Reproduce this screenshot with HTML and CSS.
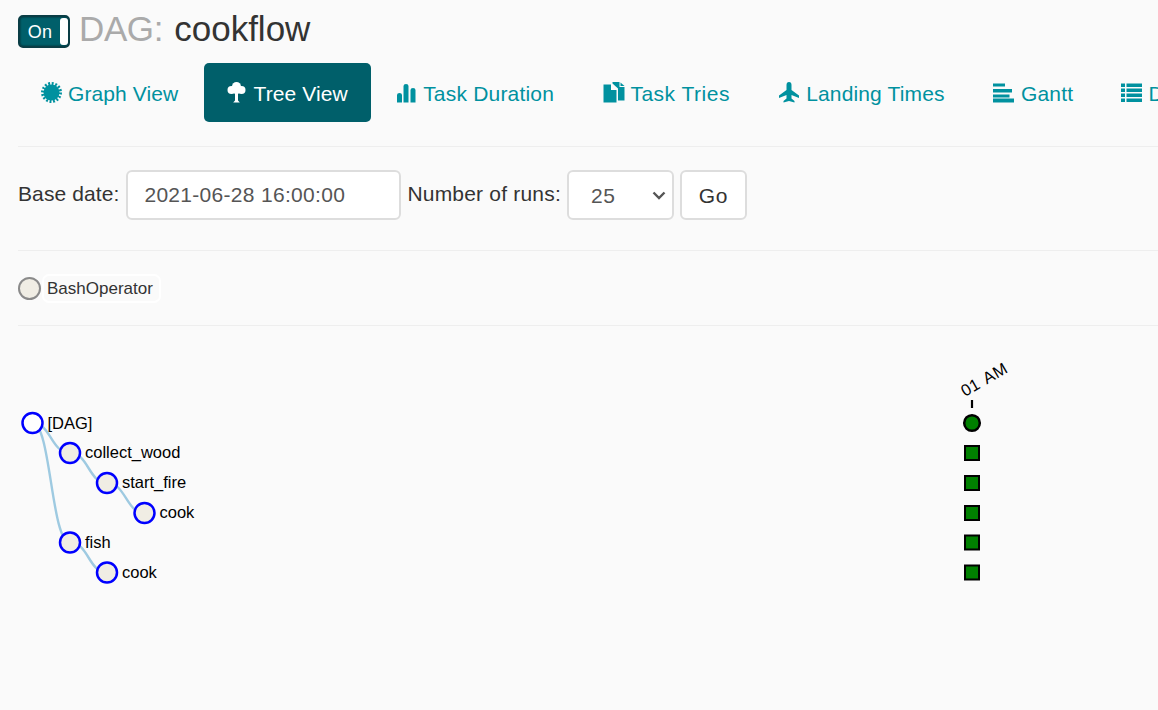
FILE: index.html
```html
<!DOCTYPE html>
<html lang="en">
<head>
<meta charset="utf-8">
<title>DAG: cookflow</title>
<link rel="stylesheet" href="styles.css">
</head>
<body>
<div class="page">
  <header class="title-row">
    <div class="toggle"><span class="toggle-on">On</span><span class="toggle-handle"></span></div>
    <h1 class="title"><span class="title-muted">DAG:</span> cookflow</h1>
  </header>

  <nav class="tabs">
    <a class="tab tab-graph">
      <svg class="icon" viewBox="0 0 22 22"><circle class="fill" cx="10.500" cy="10.500" r="8"/><circle class="spikes" cx="10.500" cy="10.500" r="9"/></svg>
      Graph View</a>
    <a class="tab tab-tree active">
      <svg class="icon" viewBox="0 0 22 22"><g class="fill"><circle cx="10.500" cy="4.500" r="4.500"/><circle cx="5.500" cy="8" r="4"/><circle cx="15.500" cy="8" r="4"/><circle cx="10.500" cy="8" r="4"/><path d="M9 10h3v8.500l1.800 2h-6.600l1.800-2z"/></g></svg>
      Tree View</a>
    <a class="tab">
      <svg class="icon" viewBox="0 0 22 22"><g class="fill"><path d="M1 20.500V13q0-2 2.500-2T6 13v7.500z"/><path d="M7.500 20.500V4q0-2 2.500-2t2.500 2v16.500z"/><path d="M14.500 20.500V8q0-2 2.500-2t2.500 2v12.500z"/></g></svg>
      Task Duration</a>
    <a class="tab tab-tries">
      <svg class="icon" viewBox="0 0 22 22"><g class="fill"><path d="M.5 2.500H8v5.500h5.500v12.500H.5z"/><path d="M9.500 0H16.500v5h5v13.500h-6.500V6.500L9.500 1.500z"/><path d="M17.500 .5l4 3.500h-4z"/></g></svg>
      Task Tries</a>
    <a class="tab tab-landing">
      <svg class="icon" viewBox="0 0 22 22"><path class="fill" d="M7.500 3q0-3 2.500-3t2.500 3v5l7.500 5.500v2.500l-7.500-3v3.500l3 2.500v1.500l-5.500-1.500-5.500 1.500v-1.500l3-2.500v-3.500l-7.500 3v-2.500l7.500-5.500z"/></svg>
      Landing Times</a>
    <a class="tab tab-gantt">
      <svg class="icon" viewBox="0 0 22 22"><g class="fill"><rect x="0" y="1.500" width="12" height="3"/><rect x="0" y="7" width="19" height="3.500"/><rect x="0" y="12.500" width="16.500" height="3"/><rect x="0" y="16.500" width="21" height="4"/></g></svg>
      Gantt</a>
    <a class="tab">
      <svg class="icon" viewBox="0 0 22 22"><g class="fill"><rect x="0" y="1.500" width="4" height="3.500"/><rect x="5.500" y="1.500" width="15.500" height="3.500"/><rect x="0" y="6.500" width="4" height="3.500"/><rect x="5.500" y="6.500" width="15.500" height="3.500"/><rect x="0" y="11.500" width="4" height="3.500"/><rect x="5.500" y="11.500" width="15.500" height="3.500"/><rect x="0" y="16.500" width="4" height="3.500"/><rect x="5.500" y="16.500" width="15.500" height="3.500"/></g></svg>
      Details</a>
  </nav>

  <hr class="rule rule-nav">

  <form class="controls">
    <label class="label label-date" for="base-date">Base date:</label>
    <input class="field date-field" id="base-date" type="text" value="2021-06-28 16:00:00">
    <label class="label label-runs" for="runs">Number of runs:</label>
    <div class="field select-field" id="runs"><span>25</span>
      <svg class="chevron" viewBox="0 0 14 9"><path d="M1.500 1.500L7 7l5.500-5.500"/></svg>
    </div>
    <button class="go" type="button">Go</button>
  </form>

  <hr class="rule rule-form">

  <div class="legend">
    <span class="legend-dot"></span>
    <span class="legend-label">BashOperator</span>
  </div>

  <hr class="rule rule-legend">

  <svg class="tree" viewBox="18 326 1140 384">
    <g class="links">
      <path d="M32.500 423C51 423 51 453 70 453"/>
      <path d="M32.500 423C51 423 51 542.500 70 542.500"/>
      <path d="M70 453C88.500 453 88.500 483 107 483"/>
      <path d="M107 483C126 483 126 513 144.500 513"/>
      <path d="M70 542.500C88.500 542.500 88.500 572.500 107 572.500"/>
    </g>
    <g class="nodes">
      <circle class="node-root" cx="32.500" cy="423" r="10"/>
      <circle cx="70" cy="453" r="10"/>
      <circle cx="107" cy="483" r="10"/>
      <circle cx="144.500" cy="513" r="10"/>
      <circle cx="70" cy="542.500" r="10"/>
      <circle cx="107" cy="572.500" r="10"/>
    </g>
    <g class="labels">
      <text x="47.500" y="429">[DAG]</text>
      <text x="85" y="458">collect_wood</text>
      <text x="122" y="488">start_fire</text>
      <text x="159.500" y="518">cook</text>
      <text x="85" y="548">fish</text>
      <text x="122" y="578">cook</text>
    </g>
    <text class="run-label" transform="translate(965 397) rotate(-30)">01 AM</text>
    <line class="run-tick" x1="972" y1="400" x2="972" y2="408"/>
    <circle class="run-circle" cx="972" cy="423" r="7.800"/>
    <g class="squares">
      <rect x="965" y="446" width="14" height="14"/>
      <rect x="965" y="476" width="14" height="14"/>
      <rect x="965" y="506" width="14" height="14"/>
      <rect x="965" y="535.500" width="14" height="14"/>
      <rect x="965" y="565.500" width="14" height="14"/>
    </g>
  </svg>
</div>
</body>
</html>
```

FILE: styles.css
```css
* { box-sizing: border-box; }

html, body {
  margin: 0;
  height: 100%;
  overflow: hidden;
  background: #fafafa;
}

body {
  font-family: "Liberation Sans", Arial, sans-serif;
  color: #333;
}

.page {
  padding: 15px 0 0 18px;
  width: 1158px;
  height: 710px;
  overflow: hidden;
}

.title-row {
  display: flex;
  align-items: center;
  gap: 9px;
  height: 32px;
}

.toggle {
  display: flex;
  width: 52px;
  height: 33px;
  border: 2px solid #0a3d45;
  border-radius: 5px;
  background: #005f6a;
  overflow: hidden;
  box-shadow: inset 0 0 2px #001f24;
}

.toggle-on {
  flex: 1;
  color: #fff;
  font-size: 18px;
  line-height: 30px;
  text-align: center;
  letter-spacing: .3px;
}

.toggle-handle {
  width: 8px;
  background: #fff;
  border-radius: 3px;
  margin: 1px 0;
}

.title {
  margin: 0;
  padding-bottom: 4px;
  font-size: 35px;
  font-weight: 400;
  line-height: 32px;
  word-spacing: 1.5px;
  color: #333;
}

.title-muted {
  color: #aaa;
  letter-spacing: -.4px;
}

.tabs {
  display: flex;
  gap: 3.75px;
  margin-top: 16px;
  white-space: nowrap;
}

.tab {
  display: flex;
  align-items: center;
  flex: none;
  gap: 5.5px;
  height: 59px;
  padding: 2px 22.5px 0;
  border-radius: 5px;
  font-size: 21px;
  letter-spacing: .2px;
  color: #00919f;
}

.tab-graph {
  padding-right: 21.5px;
  letter-spacing: .1px;
}

.tab-tree {
  padding-right: 23.5px;
  margin-right: -2px;
  letter-spacing: .1px;
}

.tab-tries { letter-spacing: .5px; }
.tab-landing { letter-spacing: .15px; }
.tab-gantt { padding-right: 21.5px; }

.tab.active {
  background: #005f6a;
  color: #fff;
}

.icon {
  flex: none;
  width: 22px;
  height: 22px;
  margin-top: -2px;
}

.fill { fill: currentColor; }

.spikes {
  fill: none;
  stroke: currentColor;
  stroke-width: 3;
  stroke-dasharray: 1.9 1.63;
}

.rule {
  height: 1px;
  margin: 0;
  border: 0;
  background: #eee;
}

.rule-nav { margin-top: 24px; }

.controls {
  display: flex;
  align-items: center;
  margin-top: 23px;
  height: 50px;
}

.label {
  font-size: 21px;
  color: #333;
  padding-bottom: 3px;
}

.label-date { letter-spacing: .1px; }
.label-runs { letter-spacing: .2px; }

.field {
  height: 50px;
  border: 2px solid #ddd;
  border-radius: 6px;
  background: #fff;
  font-family: inherit;
  font-size: 21px;
  color: #555;
}

.date-field {
  width: 275px;
  margin: 0 6px 0 7px;
  padding: 0 16px;
  letter-spacing: .3px;
  outline: none;
}

.select-field {
  display: flex;
  align-items: center;
  justify-content: space-between;
  width: 107px;
  margin-left: 6px;
  padding: 2px 6px 0 22px;
  letter-spacing: .5px;
}

.chevron {
  width: 14px;
  height: 9px;
  margin-top: -2px;
  fill: none;
  stroke: #555;
  stroke-width: 2.4;
}

.go {
  width: 67px;
  height: 50px;
  margin-left: 6px;
  padding: 2px 0 0;
  border: 2px solid #ddd;
  border-radius: 6px;
  background: #fff;
  font-family: inherit;
  font-size: 21px;
  letter-spacing: .6px;
  color: #333;
}

.rule-form { margin-top: 30px; }

.legend {
  display: flex;
  align-items: center;
  height: 74px;
}

.legend-dot {
  width: 23px;
  height: 23px;
  border: 2px solid #8a8a8a;
  border-radius: 50%;
  background: #f0ede4;
}

.legend-label {
  margin-left: 1px;
  padding: 0 6px 0 3px;
  height: 29px;
  line-height: 26px;
  border: 2px solid #fff;
  border-radius: 7px;
  background: #fafafa;
  font-size: 17px;
  color: #333;
}

.tree {
  display: block;
  width: 1140px;
  height: 384px;
}

.links path {
  fill: none;
  stroke: #9ecae1;
  stroke-width: 2.4;
}

.nodes circle {
  fill: #f0ede4;
  stroke: #0000ff;
  stroke-width: 2.5;
}

.nodes .node-root { fill: #fff; }

.labels text {
  font-size: 16.5px;
  fill: #000;
}

.run-label {
  font-size: 16.5px;
  letter-spacing: .4px;
  word-spacing: 2px;
  fill: #000;
}

.run-tick {
  stroke: #000;
  stroke-width: 2.2;
}

.run-circle {
  fill: #008000;
  stroke: #000;
  stroke-width: 2.5;
}

.squares rect {
  fill: #008000;
  stroke: #000;
  stroke-width: 2;
}
```
